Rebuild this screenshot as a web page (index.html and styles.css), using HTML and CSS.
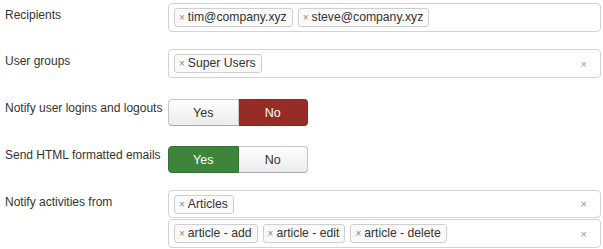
FILE: index.html
```html
<!DOCTYPE html>
<html lang="en">
<head>
  <meta charset="UTF-8">
  <title>Notification settings</title>
  <link rel="stylesheet" href="styles.css">
</head>
<body>
<div class="form">
  <div class="row">
    <label class="label">Recipients</label>
    <div class="controls">
      <div class="chosen">
        <span class="tag"><span class="x">×</span>tim@company.xyz</span>
        <span class="tag"><span class="x">×</span>steve@company.xyz</span>
      </div>
    </div>
  </div>

  <div class="row row-groups">
    <label class="label">User groups</label>
    <div class="controls">
      <div class="chosen">
        <span class="tag"><span class="x">×</span>Super Users</span>
        <span class="clear">×</span>
      </div>
    </div>
  </div>

  <div class="row row-toggle row-spaced">
    <label class="label">Notify user logins and logouts</label>
    <div class="controls">
      <div class="toggle">
        <span class="btn">Yes</span>
        <span class="btn btn-no active">No</span>
      </div>
    </div>
  </div>

  <div class="row row-toggle">
    <label class="label">Send HTML formatted emails</label>
    <div class="controls">
      <div class="toggle">
        <span class="btn btn-yes active">Yes</span>
        <span class="btn">No</span>
      </div>
    </div>
  </div>

  <div class="row">
    <label class="label">Notify activities from</label>
    <div class="controls stack">
      <div class="chosen">
        <span class="tag"><span class="x">×</span>Articles</span>
        <span class="clear">×</span>
      </div>
      <div class="chosen">
        <span class="tag"><span class="x">×</span>article - add</span>
        <span class="tag"><span class="x">×</span>article - edit</span>
        <span class="tag"><span class="x">×</span>article - delete</span>
        <span class="clear">×</span>
      </div>
    </div>
  </div>
</div>
</body>
</html>
```

FILE: styles.css
```css
body {
  margin: 0;
  font-family: "Liberation Sans", Arial, sans-serif;
  font-size: 12px;
  color: #333;
  background: #fff;
}
.form {
  padding: 3px 2px 0 5px;
}
.row {
  display: grid;
  grid-template-columns: 163px 1fr;
  margin-bottom: 17px;
}
.row:last-child {
  margin-bottom: 0;
}
.row-groups {
  margin-bottom: 21px;
}
.row-spaced {
  margin-bottom: 20px;
}
.label {
  line-height: 18px;
  padding-top: 3px;
  white-space: nowrap;
}
.row-toggle .label {
  padding-top: 0;
}
.stack {
  display: flex;
  flex-direction: column;
  gap: 1px;
}
.chosen {
  display: flex;
  align-items: center;
  gap: 5px;
  height: 29px;
  box-sizing: border-box;
  padding: 0 5px;
  border: 1px solid #d2d2d2;
  border-radius: 4px;
  background: #fff;
}
.stack .chosen:first-child {
  height: 28px;
}
.tag {
  display: inline-flex;
  align-items: center;
  height: 19px;
  box-sizing: border-box;
  padding: 0 5px 0 4px;
  border: 1px solid #cfcfcf;
  border-radius: 3px;
  background: #fafafa;
  line-height: 17px;
  font-size: 12.2px;
  white-space: nowrap;
}
.x {
  font-size: 10px;
  color: #888;
  margin-right: 3px;
}
.clear {
  margin-left: auto;
  margin-right: 8px;
  font-size: 11px;
  color: #999;
}
.toggle {
  display: flex;
  width: 140px;
  height: 27px;
}
.btn {
  flex: 1;
  display: flex;
  align-items: center;
  justify-content: center;
  border: 1px solid #c5c5c5;
  border-bottom-color: #aaa;
  background: linear-gradient(#fff, #ebebeb);
  color: #333;
  font-size: 12.5px;
}
.btn:first-child {
  border-radius: 4px 0 0 4px;
}
.btn:last-child {
  border-radius: 0 4px 4px 0;
  border-left: none;
}
.btn-no.active {
  background: #972c27;
  border-color: #8a2520;
  color: #fff;
}
.btn-yes.active {
  background: #3d853b;
  border-color: #356f33;
  color: #fff;
}
```
